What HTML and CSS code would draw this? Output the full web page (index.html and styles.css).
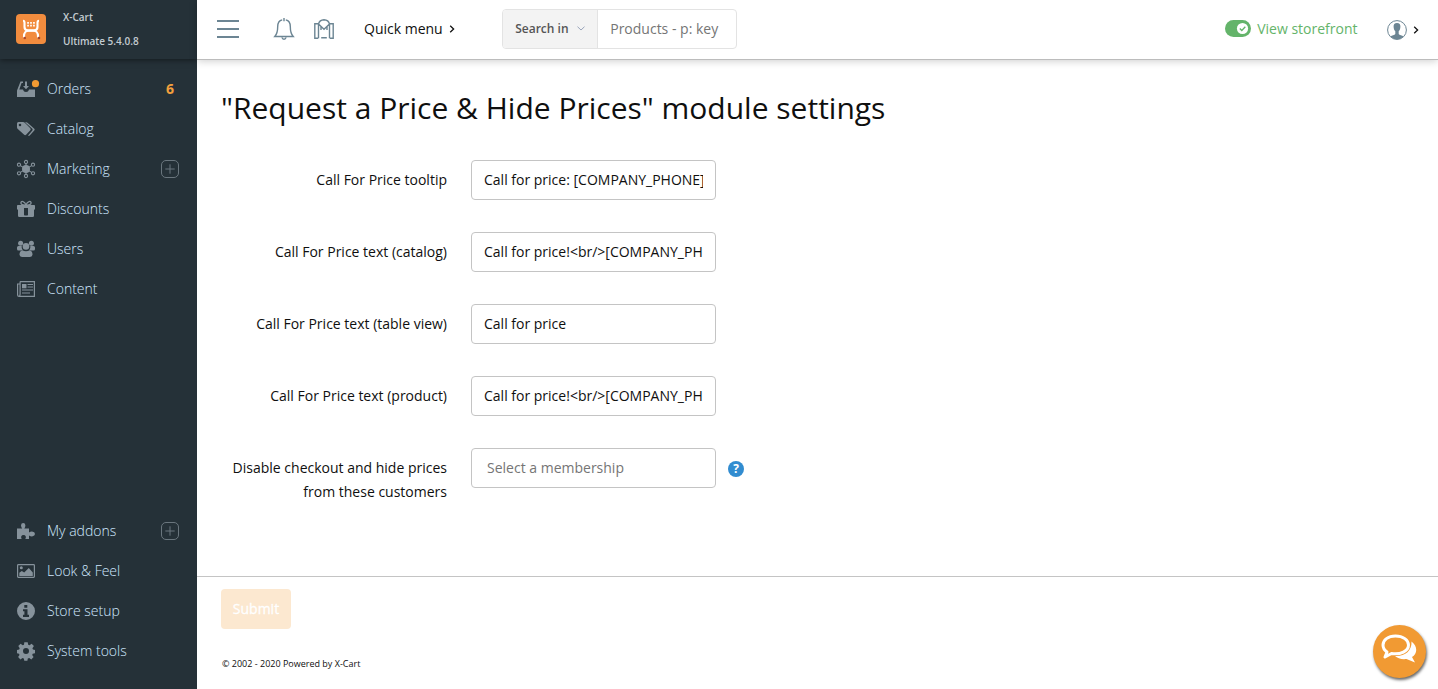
FILE: index.html
```html
<!DOCTYPE html>
<html lang="en">
<head>
<meta charset="utf-8">
<title>Module settings</title>
<link rel="stylesheet" href="styles.css">
</head>
<body>
<aside class="sidebar">
  <div class="brand">
    <svg class="logo" viewBox="0 0 30 30"><rect width="30" height="30" rx="4" fill="#f28c3e"/><g fill="none" stroke="#fff" stroke-width="2.100"><path d="M7 6.800c1.300 0 1.500.8 1.500 2v4.200c0 2 1.500 3.400 3.500 3.400h6c2 0 3.500-1.400 3.500-3.400V8.800c0-1.200.2-2 1.500-2"/><path d="M8 23.500v-1.500c0-3 2-5.300 4.500-5.300h5c2.500 0 4.500 2.300 4.500 5.300v1.500"/></g><path d="M11.200 8.800h7.600M11.200 11.600h7.600" stroke="#fff" stroke-width="1.700" stroke-dasharray="1.700 1.250"/><circle cx="8.800" cy="24" r="1.300" fill="#a94b2e"/><circle cx="23" cy="24" r="1.300" fill="#a94b2e"/></svg>
    <div class="brand-text"><span>X-Cart</span><span>Ultimate 5.4.0.8</span></div>
  </div>
  <nav class="menu">
    <a class="item"><svg class="icon" viewBox="0 0 18 18"><path d="M3.500 1.500H6V3H4.600L2.300 9.500H6c.4 1.700 1.500 2.500 3 2.500s2.600-.8 3-2.500h6V17H0v-6.500z"/><path d="M8 1.500h2V6h2L9 9.300 6 6h2z"/><circle class="dot" cx="18.500" cy="3.700" r="3.600"/></svg><span>Orders</span><b class="count">6</b></a>
    <a class="item"><svg class="icon" viewBox="0 0 18 18"><path fill-rule="evenodd" d="M0 3.500Q0 2 1.500 2H6q1 0 1.800.8l5.500 5.500q.9 1 0 1.900l-4.200 4.600q-1 .9-1.900 0L.8 9Q0 8.200 0 7.200zM3 3.700a1.300 1.300 0 1 0 0 2.600 1.300 1.300 0 0 0 0-2.600z"/><path d="M8 2.300h1.300q.8 0 1.500.7l6.500 5.700q.9.800 0 1.700l-4.600 5.200q-.9.700-1.600 0l4.200-5q.8-1 0-1.900z"/></svg><span>Catalog</span></a>
    <a class="item"><svg class="icon" viewBox="0 0 18 18"><circle cx="9" cy="9" r="4"/><g fill="none" stroke="currentColor" stroke-width="1.100"><circle cx="9" cy="2" r="1.600"/><circle cx="9" cy="16" r="1.600"/><circle cx="2" cy="4.700" r="1.600"/><circle cx="16" cy="4.700" r="1.600"/><circle cx="2" cy="13.300" r="1.600"/><circle cx="16" cy="13.300" r="1.600"/><path d="M9 3.500v11M3.400 5.600l11.200 6.800M14.600 5.600L3.400 12.400"/></g></svg><span>Marketing</span><svg class="plus" viewBox="0 0 18 18"><rect x=".5" y=".5" width="17" height="17" rx="4.500"/><path d="M4.300 9h9.400M9 4.300v9.400"/></svg></a>
    <a class="item"><svg class="icon" viewBox="0 0 18 18"><g fill="none" stroke="currentColor" stroke-width="1.300"><path d="M9 5C6 5.300 3.700 4.500 3.900 2.700S7.500.6 9 5zM9 5c3 .3 5.300-.5 5.100-2.300S10.500.6 9 5z"/></g><path fill-rule="evenodd" d="M.8 5h16.400q.8 0 .8.800V9q0 .7-1 .7v6q0 1.300-1.300 1.300H2.300Q1 17 1 15.700v-6Q0 9.700 0 9V5.800Q0 5 .8 5zM7 8v6.700q0 .8.800.8h2.400q.8 0 .8-.8V8z"/></svg><span>Discounts</span></a>
    <a class="item"><svg class="icon" viewBox="0 0 18 18"><circle cx="3.600" cy="3.200" r="2.500"/><circle cx="14.400" cy="3.200" r="2.500"/><path d="M1.500 6h3.200q-.3 3.700 2 4.500H1.500Q0 10.500 0 9V7.500Q0 6 1.500 6zM16.500 6h-3.200q.3 3.700-2 4.500h5.200q1.500 0 1.500-1.500V7.500Q18 6 16.500 6z"/><circle cx="9" cy="6.400" r="3.300"/><path d="M5.200 10.600q3.800 1.200 7.600 0 2.700.5 2.700 4 0 2.400-2.500 2.400H5q-2.500 0-2.500-2.400 0-3.500 2.700-4z"/></svg><span>Users</span></a>
    <a class="item"><svg class="icon" viewBox="0 0 18 18"><g fill="none" stroke="currentColor" stroke-width="1.200"><path d="M3.100 1.600h14.300v14.800H2Q.6 16.400.6 15V4h2.500M3.100 1.600V14q0 2-1.100 2.300"/><path d="M10.500 4.500H16M10.500 7H16M5 10h11M5 13h8"/></g><path d="M5 4h4.500v4.300H5z"/></svg><span>Content</span></a>
  </nav>
  <nav class="menu menu-bottom">
    <a class="item"><svg class="icon" viewBox="0 0 18 18"><path d="M0 6.500h5.200Q4 5.200 4 3.300 4.200 1 6.200 1t2.200 2.300Q8.400 5.200 7.300 6.500H12v4q1.500-1 3-.9 3 .5 3 2.400t-3 2.400q-1.500 0-3-1V17H8.300q.8-1.300.5-2.600Q8.200 13 6.500 13T4.200 14.400Q3.900 15.700 4.700 17H0z"/></svg><span>My addons</span><svg class="plus" viewBox="0 0 18 18"><rect x=".5" y=".5" width="17" height="17" rx="4.500"/><path d="M4.300 9h9.400M9 4.300v9.400"/></svg></a>
    <a class="item"><svg class="icon" viewBox="0 0 18 18"><rect x=".6" y="2.600" width="16.800" height="12.800" rx=".8" fill="none" stroke="currentColor" stroke-width="1.200"/><circle cx="4.300" cy="5.800" r="1.500"/><path d="M2.300 14v-3.300l2.500-1.600 2.400 1.500L11.800 6l4 4.500V14z"/></svg><span>Look &amp; Feel</span></a>
    <a class="item"><svg class="icon" viewBox="0 0 18 18"><path fill-rule="evenodd" d="M9 0a9 9 0 1 0 0 18A9 9 0 0 0 9 0zM7.300 3h3v2.700h-3zM6 7.300h4.500v5.500H12V15H6v-2.200h1.400V9.300H6z"/></svg><span>Store setup</span></a>
    <a class="item"><svg class="icon" viewBox="0 0 18 18"><path fill-rule="evenodd" d="M7.300.2h3.400l.5 2.500 1.300.5 2.100-1.500 2.300 2.300-1.500 2.200.6 1.300 2 .4v3.300l-2.300.5-.5 1.300 1.400 2.100-2.300 2.300-2.100-1.400-1.400.6-.4 2.200H7.300l-.5-2.200-1.300-.6-2.100 1.400-2.300-2.300 1.400-2.100-.5-1.300L0 11.200V7.900l2.200-.4.500-1.300L1.300 4l2.300-2.300 2.100 1.500 1.300-.5zM9 6a3 3 0 1 0 0 6 3 3 0 0 0 0-6z"/></svg><span>System tools</span></a>
  </nav>
</aside>
<div class="page">
  <header class="topbar">
    <svg class="burger" viewBox="0 0 22 18"><path d="M0 1h22M0 9h22M0 17h22"/></svg>
    <svg class="bell" viewBox="0 0 20 22"><path d="M8.200 1.900C5 2.600 3.700 5 3.700 8.500c0 5-.6 7.500-2.900 10h18.400c-2.300-2.500-2.900-5-2.900-10 0-3.500-1.300-5.900-4.500-6.600M10 0v3.200M8 19.500q.3 1.700 2 1.700t2-1.700"/></svg>
    <svg class="market" viewBox="0 0 20 20"><path d="M4.200 19.300H.8V4.700h3.700v14.600M15.800 19.300h3.400V4.700h-3.700v14.600M4.500 5l5.500 5.300L15.500 5M4.500 5Q5.500 1 10 .8 14.500 1 15.500 5M7 7.700V11M13 7.700V11M7.200 18.800h5.600"/></svg>
    <a class="quick">Quick menu</a><svg class="chev" viewBox="0 0 6 8"><path d="M1.200.8L4.600 4 1.200 7.200"/></svg>
    <div class="search"><div class="search-in">Search in<svg class="down" viewBox="0 0 8 5"><path d="M.5.700L4 4 7.500.7"/></svg></div><div class="search-text">Products - p: key</div></div>
    <div class="store"><svg class="toggle" viewBox="0 0 26 17"><rect width="26" height="17" rx="8.500" fill="#64b46a"/><circle cx="17.500" cy="8.500" r="5.600" fill="#fff"/><path d="M14.800 8.500l2 2 3.500-3.800" fill="none" stroke="#64b46a" stroke-width="1.300"/></svg><span>View storefront</span></div>
    <svg class="user" viewBox="0 0 20 20"><circle cx="10" cy="10" r="9.400" fill="#fff" stroke="#6c8593" stroke-width="1"/><path d="M10 3c2.600 0 3.500 1.500 3.400 3.600 0 2.400-.8 3.700-1.700 4.700v2.600c.6 1.300 3.600 1.100 4.800 2.600Q13.800 19.400 10 19.400T3.500 16.500c1.200-1.500 4.200-1.300 4.800-2.600v-2.600c-.9-1-1.700-2.300-1.700-4.700C6.500 4.500 7.400 3 10 3z" fill="#6c8593"/></svg>
    <svg class="chev chev-user" viewBox="0 0 6 8"><path d="M1.200.8L4.600 4 1.200 7.200"/></svg>
  </header>
  <main class="content">
    <h1>"Request a Price &amp; Hide Prices" module settings</h1>
    <form class="form">
      <div class="row"><label>Call For Price tooltip</label><div class="field"><span>Call for price: [COMPANY_PHONE]</span></div></div>
      <div class="row"><label>Call For Price text (catalog)</label><div class="field"><span>Call for price!&lt;br/&gt;[COMPANY_PH</span></div></div>
      <div class="row"><label>Call For Price text (table view)</label><div class="field"><span>Call for price</span></div></div>
      <div class="row"><label>Call For Price text (product)</label><div class="field"><span>Call for price!&lt;br/&gt;[COMPANY_PH</span></div></div>
      <div class="row"><label>Disable checkout and hide prices from these customers</label><div class="field select"><span>Select a membership</span></div><i class="help">?</i></div>
    </form>
  </main>
  <footer class="footer">
    <button class="submit">Submit</button>
    <p class="copy">© 2002 - 2020 Powered by X-Cart</p>
  </footer>
</div>
<div class="chat"><svg viewBox="0 0 36 32"><path d="M30.500 8.500c6.500 5 6 12.500.5 15.500l3 5.500-8.500-3.500c-5 .5-9-.5-11.500-3C24 23.500 31 18 30.500 8.500z" fill="#fff"/><path d="M14.500 3C7 3 2 7 2 12c0 3 1.500 5.300 4 7l-2 5 6.500-3.500c9 1.500 17-2.500 17-8.500 0-5-5.500-9-13-9z" fill="#f19a33" stroke="#fff" stroke-width="3" stroke-linejoin="round"/></svg></div>
</body>
</html>
```
FILE: styles.css
```css
* { box-sizing: border-box; }
body { margin: 0; height: 689px; display: flex; overflow: hidden; background: #fff; color: #0f0f0f; font: 14px/24px "Open Sans", sans-serif; }
svg { display: block; flex: none; overflow: visible; }

.sidebar { width: 197px; flex: none; background: #253138; display: flex; flex-direction: column; overflow: hidden; }
.brand { height: 59px; flex: none; display: flex; padding-left: 16px; gap: 17px; box-shadow: 0 1px 6px rgba(0,0,0,.5); }
.logo { width: 30px; height: 30px; margin-top: 14px; }
.brand-text { display: flex; flex-direction: column; padding-top: 5px; font-size: 10px; font-weight: 600; color: #c3cbd1; white-space: nowrap; }
.menu { padding-top: 10px; }
.menu-bottom { margin-top: auto; padding: 0 0 18px; }
.item { height: 40px; display: flex; align-items: center; padding: 0 18px 0 17px; color: #d0e8ff; font-weight: 300; }
.item > span { margin-left: 12px; }
.icon { width: 18px; height: 18px; color: #86929b; fill: currentColor; }
.icon .dot { fill: #f19a33; }
.count { margin-left: auto; margin-right: 5px; color: #f2a03d; font-weight: 700; }
.plus { width: 18px; height: 18px; margin-left: auto; fill: none; stroke: #6a767e; }

.page { flex: 1; min-width: 0; display: flex; flex-direction: column; }
.topbar { height: 60px; flex: none; display: flex; align-items: center; padding: 0 19px 2px 20px; border-bottom: 1px solid #bcbcbc; box-shadow: 0 1px 8px rgba(0,0,0,.2); }
.burger { width: 22px; height: 18px; stroke: #6c8593; stroke-width: 1.8; }
.bell { width: 20px; height: 22px; margin-left: 35px; fill: none; stroke: #6c8593; stroke-width: 1.4; }
.market { width: 20px; height: 20px; margin-left: 20px; fill: none; stroke: #6c8593; stroke-width: 1.4; }
.quick { margin-left: 30px; }
.chev { width: 6px; height: 8px; margin-left: 6px; fill: none; stroke: #111; stroke-width: 1.3; }
.search { width: 235px; height: 40px; margin-left: 47px; display: flex; border: 1px solid #e3e3e3; border-radius: 4px; overflow: hidden; }
.search-in { width: 95px; flex: none; display: flex; align-items: center; padding-left: 12.5px; gap: 8px; background: #f3f3f3; border-right: 1px solid #e3e3e3; font-size: 12px; font-weight: 600; color: #555; white-space: nowrap; }
.down { width: 8px; height: 5px; fill: none; stroke: #9aa5bb; }
.search-text { padding: 7px 0 0 12.5px; color: #757575; white-space: nowrap; }
.store { margin-left: auto; display: flex; align-items: center; gap: 6px; color: #64b46a; }
.toggle { width: 26px; height: 17px; }
.user { width: 20px; height: 20px; margin: 2px 0 0 29.500px; }
.chev-user { margin: 2px 0 0 6px; }

.content { flex: 1; padding: 28px 24px 0; }
h1 { margin: 0; font-size: 30px; font-weight: 400; line-height: 40px; white-space: nowrap; }
.form { margin-top: 32px; display: flex; flex-direction: column; gap: 32px; }
.row { display: flex; height: 40px; }
.row label { width: 226px; flex: none; padding-top: 8px; text-align: right; }
.field { width: 245px; height: 40px; margin-left: 24px; border: 1px solid #c4c4c4; border-radius: 4px; padding: 7px 12px; }
.field span { display: block; overflow: hidden; white-space: nowrap; }
.select { padding-left: 15px; color: #757575; }
.help { width: 16px; height: 16px; margin: 13px 0 0 12px; border-radius: 50%; background: #318cd0; color: #fff; font: 700 12px/16px "Open Sans", sans-serif; text-align: center; }

.footer { height: 113px; flex: none; border-top: 1px solid #c4c4c4; padding: 12px 24px 0; }
.submit { display: block; width: 70px; height: 40px; border: 0; border-radius: 4px; padding: 0 0 2px; background: #fce8d0; color: #fff; font: 14px "Open Sans", sans-serif; -webkit-text-stroke: .3px #fff; }
.copy { margin: 23px 0 0 1px; font-size: 9px; }
.chat { position: absolute; left: 1373px; top: 625px; width: 53px; height: 53px; border-radius: 50%; background: #f19a33; box-shadow: 1px 2px 3px rgba(0,0,0,.6); }
.chat svg { width: 36px; height: 32px; margin: 8px 0 0 8px; }
```
